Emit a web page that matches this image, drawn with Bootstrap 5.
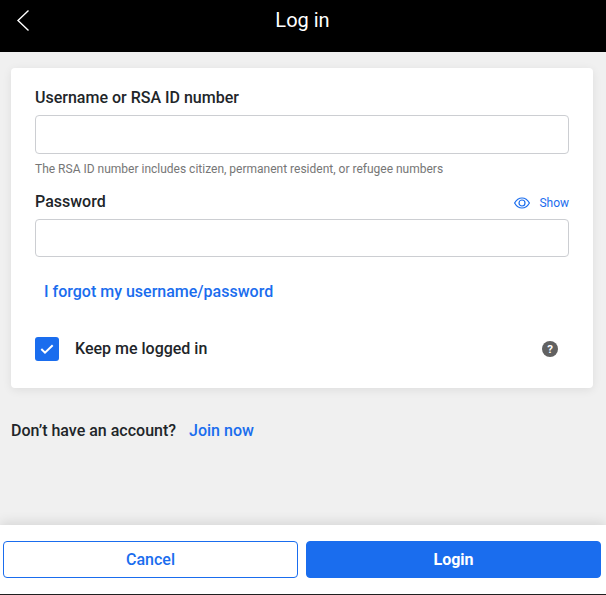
<!DOCTYPE html>
<html lang="en">
<head>
<meta charset="utf-8">
<title>Log in</title>
<link rel="stylesheet" href="https://cdn.jsdelivr.net/npm/bootstrap@5.3.0/dist/css/bootstrap.min.css">
<style>
html, body { height: 100%; }
body { font-family: Roboto, "Liberation Sans", sans-serif; background: #f0f0f0; color: #212529; overflow: hidden; }
.shell { height: 595px; }
.topbar { height: 52px; background: #000; color: #fff; flex: none; }
.topbar-title { font-size: 20px; line-height: 40px; padding-bottom: 13px; margin-right: 1px; }
.back-btn { left: 16px; top: 9px; line-height: 0; }
.main-area { padding: 16px 13px 0 11px; }
.form-panel { height: 320px; padding: 20px 24px 0; border-radius: 4px; box-shadow: 0 2px 10px rgba(0,0,0,.08); }
.field-label { font-size: 16px; font-weight: 500; line-height: 19px; margin: 0; }
.pw-label { margin-top: 1px; }
.field-input { height: 39px; margin-top: 8px; border-color: #ccced2; border-radius: 4px; }
.field-input.pw-input { height: 38px; margin-top: 7px; }
.hint-text { font-size: 12px; line-height: 14px; color: #767676; margin-top: 8px; }
.pw-row { margin-top: 15px; height: 21px; }
.show-link { font-size: 12px; color: #1a6dee; text-decoration: none; gap: 9px; }
.forgot-link { font-size: 16px; font-weight: 500; color: #1a6dee; text-decoration: none; line-height: 19px; margin: 25px 0 0 9px; display: block; }
.keep-row { margin-top: 36px; padding-right: 11px; }
.check-tile { width: 24px; height: 24px; background: #1a6dee; border-radius: 3px; flex: none; }
.keep-label { font-size: 16px; font-weight: 500; margin-left: 16px; line-height: 24px; }
.signup-row { font-size: 16px; font-weight: 500; margin-top: 33px; line-height: 19px; gap: 13px; }
.signup-row a { color: #1a6dee; text-decoration: none; }
.bottom-bar { height: 69px; padding: 16px 5px 0 3px; gap: 8px; box-shadow: 0 -2px 12px rgba(0,0,0,.12); flex: none; position: relative; }
.bottom-bar .btn { height: 37px; flex: 1 1 0; font-size: 16px; font-weight: 500; padding: 0; border-radius: 4px; }
.bottom-bar .btn-login { color: #fff; background: #1a6dee; border: 1px solid #1a6dee; font-weight: 700; }
.btn-cancel { color: #1a6dee; border: 1px solid #1a6dee; background: #fff; }
.end-line { height: 1px; background: #222; flex: none; }
</style>
</head>
<body>
<div class="shell d-flex flex-column">
  <header class="topbar position-relative d-flex justify-content-center align-items-center">
    <a class="back-btn position-absolute" href="#" aria-label="Back">
      <svg width="14" height="24" viewBox="0 0 14 24" fill="none" stroke="#fff" stroke-width="1.4"><path d="M12.5 1.5 2 11.5 12.5 21.5"/></svg>
    </a>
    <div class="topbar-title">Log in</div>
  </header>
  <main class="main-area flex-grow-1">
    <form class="form-panel bg-white">
      <label class="field-label d-block" for="user">Username or RSA ID number</label>
      <input id="user" class="form-control field-input" type="text">
      <div class="hint-text">The RSA ID number includes citizen, permanent resident, or refugee numbers</div>
      <div class="pw-row d-flex justify-content-between align-items-start">
        <label class="field-label pw-label" for="pass">Password</label>
        <a class="show-link d-flex align-items-center align-self-end" href="#">
          <svg width="16" height="12" viewBox="0 0 16 12" fill="none" stroke="#1a6dee" stroke-width="1.2"><path d="M.6 6C2.4 2.8 5 1 8 1s5.6 1.8 7.4 5C13.600 9.200 11 11 8 11S2.400 9.200.6 6Z"/><circle cx="8" cy="6" r="3"/></svg>
          <span>Show</span>
        </a>
      </div>
      <input id="pass" class="form-control field-input pw-input" type="password">
      <a class="forgot-link" href="#">I forgot my username/password</a>
      <div class="keep-row d-flex align-items-center">
        <span class="check-tile d-flex align-items-center justify-content-center">
          <svg width="14" height="12" viewBox="0 0 14 12" fill="none" stroke="#fff" stroke-width="2"><path d="M1.300 6 5 9.700 12.700 2.200"/></svg>
        </span>
        <span class="keep-label">Keep me logged in</span>
        <svg class="ms-auto" width="16" height="16" viewBox="0 0 16 16"><circle cx="8" cy="8" r="8" fill="#616161"/><text x="8" y="12" text-anchor="middle" font-family="Roboto, sans-serif" font-size="11.500" font-weight="700" fill="#fff">?</text></svg>
      </div>
    </form>
    <div class="signup-row d-flex">
      <span>Don’t have an account?</span>
      <a href="#">Join now</a>
    </div>
  </main>
  <footer class="bottom-bar bg-white d-flex">
    <button class="btn btn-cancel" type="button">Cancel</button>
    <button class="btn btn-login" type="button">Login</button>
  </footer>
  <div class="end-line"></div>
</div>
<script src="https://cdn.jsdelivr.net/npm/bootstrap@5.3.0/dist/js/bootstrap.bundle.min.js"></script>
</body>
</html>
